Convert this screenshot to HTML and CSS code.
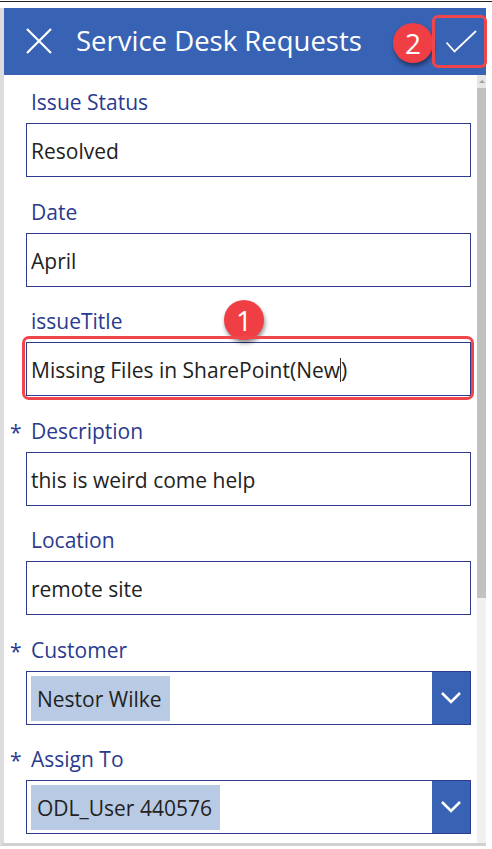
FILE: index.html
```html
<!DOCTYPE html>
<html>
<head>
<meta charset="utf-8">
<link rel="stylesheet" href="styles.css">
</head>
<body>
<div class="topline"></div>
<div class="window">
  <header class="header">
    <svg class="close" width="26" height="26" viewBox="0 0 26 26"><path d="M1 1 L25 25 M25 1 L1 25" stroke="#fff" stroke-width="2.2" fill="none"/></svg>
    <div class="title">Service Desk Requests</div>
    <div class="badge badge-2">2</div>
    <div class="check-box">
      <svg width="34" height="26" viewBox="0 0 34 26"><path d="M1.5 12.5 L9.5 21.5 L31 1" stroke="#fff" stroke-width="1.8" fill="none"/></svg>
    </div>
  </header>
  <div class="body">
    <main class="form">
      <div class="field">
        <div class="label">Issue Status</div>
        <div class="input">Resolved</div>
      </div>
      <div class="field">
        <div class="label">Date</div>
        <div class="input">April</div>
      </div>
      <div class="field highlight-field">
        <div class="label">issueTitle</div>
        <div class="input">Missing Files in SharePoint(New<span class="caret"></span>)</div>
        <div class="badge badge-1">1</div>
        <div class="red-outline"></div>
      </div>
      <div class="field">
        <div class="label"><span class="req">*</span>Description</div>
        <div class="input">this is weird come help</div>
      </div>
      <div class="field">
        <div class="label">Location</div>
        <div class="input">remote site</div>
      </div>
      <div class="field">
        <div class="label"><span class="req">*</span>Customer</div>
        <div class="input combo">
          <span class="chip">Nestor Wilke</span>
          <span class="chev"><svg width="22" height="14" viewBox="0 0 22 14"><path d="M2 2 L11 11 L20 2" stroke="#fff" stroke-width="2.6" fill="none"/></svg></span>
        </div>
      </div>
      <div class="field">
        <div class="label"><span class="req">*</span>Assign To</div>
        <div class="input combo">
          <span class="chip">ODL_User 440576</span>
          <span class="chev"><svg width="22" height="14" viewBox="0 0 22 14"><path d="M2 2 L11 11 L20 2" stroke="#fff" stroke-width="2.6" fill="none"/></svg></span>
        </div>
      </div>
    </main>
    <div class="scrollbar">
      <div class="sb-up"><span class="tri"></span></div>
      <div class="sb-thumb"></div>
      <div class="sb-track"></div>
    </div>
  </div>
</div>
</body>
</html>
```
FILE: styles.css
```css
html, body {
  margin: 0;
  padding: 0;
  background: #fff;
  font-family: "Open Sans", "Noto Sans", sans-serif;
  overflow: hidden;
}
.topline {
  height: 1px;
  margin-top: 1px;
  background: #222;
}
.window {
  margin-top: 6px;
  margin-left: 0;
  border-left: 4px solid #dcdcdc;
  width: 486px;
  height: 838px;
  border-bottom: 3px solid #d0d0d0;
  box-sizing: border-box;
  display: flex;
  flex-direction: column;
}
.header {
  position: relative;
  height: 67px;
  flex: none;
  background: #3862b4;
  display: flex;
  align-items: center;
  color: #fff;
}
.close {
  margin-left: 22px;
  margin-top: -2px;
}
.title {
  margin-left: 24px;
  font-size: 27.5px;
  margin-top: -3px;
  letter-spacing: 0;
}
.badge {
  position: absolute;
  width: 40px;
  height: 40px;
  border-radius: 50%;
  background: #ef3f45;
  color: #fff;
  font-size: 28px;
  line-height: 40px;
  text-align: center;
  box-shadow: 1px 3px 4px rgba(0,0,0,0.45);
}
.badge-2 {
  left: 389px;
  top: 15px;
}
.check-box {
  position: absolute;
  left: 428px;
  top: 7px;
  width: 55px;
  height: 53px;
  box-sizing: border-box;
  border: 3px solid #f0454b;
  border-radius: 6px;
  display: flex;
  align-items: center;
  justify-content: center;
}
.check-box svg {
  margin-top: 2px;
  margin-left: 4px;
}
.body {
  flex: 1;
  display: flex;
  min-height: 0;
}
.form {
  flex: 1;
  padding-top: 12px;
  display: flex;
  flex-direction: column;
  gap: 19.5px;
}
.field {
  position: relative;
  display: flex;
  flex-direction: column;
  gap: 6px;
}
.label {
  height: 30px;
  line-height: 30px;
  font-size: 21px;
  color: #2a3a8e;
  padding-left: 27px;
  position: relative;
}
.req {
  position: absolute;
  left: 6px;
  top: 1px;
  color: #2a3a8e;
}
.input {
  margin-left: 22px;
  width: 445px;
  height: 54px;
  box-sizing: border-box;
  border: 1.5px solid #2e3a8e;
  font-size: 21px;
  color: #222;
  line-height: 54px;
  padding-left: 4px;
  white-space: nowrap;
  position: relative;
}
.caret {
  display: inline-block;
  width: 1px;
  height: 24px;
  background: #333;
  vertical-align: middle;
  margin-top: -4px;
}
.badge-1 {
  left: 220px;
  top: -6px;
}
.red-outline {
  position: absolute;
  left: 18px;
  top: 30px;
  width: 452px;
  height: 64px;
  box-sizing: border-box;
  border: 3.5px solid #f0454b;
  border-radius: 7px;
}
.combo {
  display: flex;
  align-items: stretch;
  padding: 4px 0 3px 4px;
  line-height: normal;
}
.chip {
  background: #b9cbe4;
  display: flex;
  align-items: center;
  padding: 1px 8px 0 6px;
  color: #222;
}
.chev {
  margin-left: auto;
  margin-top: -4px;
  margin-bottom: -3px;
  width: 38px;
  background: #3862b4;
  display: flex;
  align-items: center;
  justify-content: center;
}
.scrollbar {
  width: 9px;
  flex: none;
  display: flex;
  flex-direction: column;
  background: #f0f0f0;
}
.sb-up {
  height: 13px;
  background: #e6e6e6;
  display: flex;
  justify-content: center;
  align-items: center;
}
.tri {
  width: 0;
  height: 0;
  border-left: 3px solid transparent;
  border-right: 3px solid transparent;
  border-bottom: 3px solid #a0a0a0;
}
.sb-thumb {
  height: 510px;
  background: #c1c1c1;
}
.sb-track {
  flex: 1;
  background: #f0f0f0;
}
```
